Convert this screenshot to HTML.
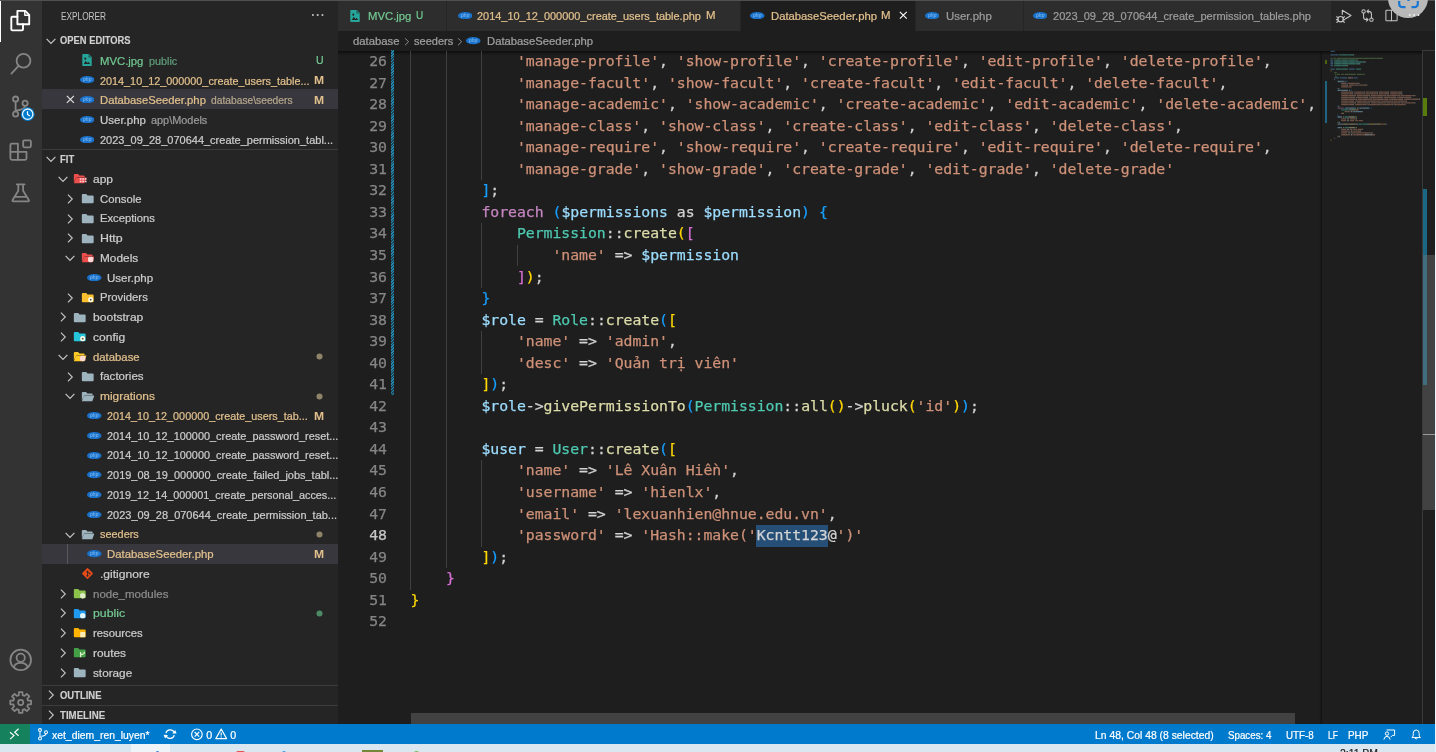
<!DOCTYPE html>
<html><head><meta charset="utf-8"><title>DatabaseSeeder.php - FIT - Visual Studio Code</title>
<style>
html,body{margin:0;padding:0;}
body{width:1436px;height:752px;overflow:hidden;background:#1e1e1e;position:relative;font-family:'Liberation Sans', sans-serif;}
.t{position:absolute;white-space:pre;font-family:'Liberation Sans', sans-serif;-webkit-text-stroke:0.22px currentColor;}
#root{position:absolute;left:0;top:0;width:1436px;height:752px;overflow:hidden;will-change:transform;}
.code{position:absolute;white-space:pre;font-family:'DejaVu Sans Mono', 'Liberation Mono', monospace;-webkit-text-stroke:0.25px currentColor;}
.code span.s{color:#ce9178} .code span.v{color:#9cdcfe} .code span.k{color:#c586c0}
.code span.c{color:#4ec9b0} .code span.f{color:#dcdcaa} .code span.y{color:#ffd700}
.code span.p{color:#da70d6} .code span.b{color:#179fff} .code span.w{color:#d4d4d4}
</style></head><body><div id="root">
<div style="position:absolute;left:0.00px;top:0.00px;width:42.00px;height:723.80px;background:#333333;"></div>
<div style="position:absolute;left:42.00px;top:0.00px;width:296.00px;height:723.80px;background:#252526;"></div>
<div style="position:absolute;left:338.00px;top:0.00px;width:1098.00px;height:30.80px;background:#252526;"></div>
<div style="position:absolute;left:0.00px;top:0.00px;width:1436.00px;height:1.00px;background:#505050;"></div>
<div style="position:absolute;left:0.00px;top:1.00px;width:1.30px;height:41.30px;background:#ffffff;"></div>
<svg style="position:absolute;left:0.00px;top:0.00px;" width="42.00" height="724.00" viewBox="0 0 42 724"><g fill="none" stroke-linejoin="round" stroke-linecap="round">
<g stroke="#ffffff" stroke-width="1.9">
<path d="M17.4 10.9 H25.2 L29.2 14.9 V24.2 H17.4 Z"/><path d="M24.8 11.3 V15.3 H28.8" stroke-width="1.4"/>
<path d="M17.4 16.8 H12.4 Q11.3 16.8 11.3 17.9 V29.3 Q11.3 30.4 12.4 30.4 H21.9 Q23 30.4 23 29.3 V24.2"/>
</g>
<g stroke="#858585" stroke-width="1.8">
<circle cx="23.5" cy="60.8" r="6.9"/><path d="M18.6 65.8 L11.4 73.6"/>
<circle cx="15.6" cy="99.1" r="2.6"/><circle cx="15.6" cy="114" r="2.6"/><circle cx="25.1" cy="103.2" r="2.6"/>
<path d="M15.6 101.7 V111.4"/><path d="M25.1 105.8 Q25 109.6 15.9 110.6"/>
<path d="M10.4 145.2 Q10.4 143.7 11.9 143.7 H17.9 V151.8 H26.5 V158.3 Q26.5 159.8 25 159.8 H11.9 Q10.4 159.8 10.4 158.3 Z"/>
<path d="M10.4 151.8 H17.9 V159.8"/>
<rect x="23.2" y="140.3" width="7.7" height="7.0" rx="1.2"/>
<path d="M16.8 184.3 H24.6 M18.3 184.3 V190.8 L12.6 200 Q12 201.4 13.4 201.4 H28 Q29.4 201.4 28.8 200 L23.1 190.8 V184.3"/><path d="M15.2 196.9 H26.2"/>
<circle cx="20.7" cy="659.9" r="10.3"/><circle cx="20.7" cy="657.7" r="4.1"/><path d="M13.8 667.2 Q15 662.8 20.7 662.8 Q26.4 662.8 27.6 667.2"/>
<path d="M28.06 700.62 L31.15 700.71 L31.15 704.29 L28.06 704.38 L27.24 706.38 L29.36 708.62 L26.82 711.16 L24.58 709.04 L22.58 709.86 L22.49 712.95 L18.91 712.95 L18.82 709.86 L16.82 709.04 L14.58 711.16 L12.04 708.62 L14.16 706.38 L13.34 704.38 L10.25 704.29 L10.25 700.71 L13.34 700.62 L14.16 698.62 L12.04 696.38 L14.58 693.84 L16.82 695.96 L18.82 695.14 L18.91 692.05 L22.49 692.05 L22.58 695.14 L24.58 695.96 L26.82 693.84 L29.36 696.38 L27.24 698.62 Z" stroke-width="1.7"/><circle cx="20.7" cy="702.5" r="2.6" stroke-width="1.7"/>
</g></g>
<circle cx="27.7" cy="114.2" r="6.9" fill="#007acc"/><circle cx="27.7" cy="114.2" r="5.2" fill="none" stroke="#eaf6ff" stroke-width="1.3"/>
<path d="M27.5 111.2 V114.4 L29.9 115.9" fill="none" stroke="#fff" stroke-width="1.2"/></svg>
<div class="t " style="left:60.50px;top:7.60px;line-height:16px;font-size:10.5px;color:#c4c4c4;font-weight:400;transform:scaleX(0.7886);transform-origin:0 50%;-webkit-text-stroke:0;">EXPLORER</div>
<svg style="position:absolute;left:310.60px;top:12.10px;" width="13.40" height="6.00" viewBox="0 0 14 6"><circle cx="2" cy="3" r="1.1" fill="#c5c5c5"/><circle cx="7" cy="3" r="1.1" fill="#c5c5c5"/><circle cx="12" cy="3" r="1.1" fill="#c5c5c5"/></svg>
<svg style="position:absolute;left:45.20px;top:34.97px;" width="12.00" height="12.00" viewBox="0 0 12 12"><path d="M1.6 3.9 L6 8.3 L10.4 3.9" fill="none" stroke="#c5c5c5" stroke-width="1.2"/></svg>
<div class="t " style="left:60.10px;top:33.17px;line-height:16px;font-size:10.1px;color:#d0d0d0;font-weight:700;transform:scaleX(0.9278);transform-origin:0 50%;-webkit-text-stroke:0.15px currentColor;">OPEN EDITORS</div>
<div style="position:absolute;left:42.00px;top:89.04px;width:296.00px;height:19.95px;background:#37373d;"></div>
<svg style="position:absolute;left:80.60px;top:53.22px;" width="12.00" height="14.00" viewBox="0 0 14 16"><path d="M2.5 1 H9 L12.5 4.5 V14 Q12.5 15 11.5 15 H2.5 Q1.5 15 1.5 14 V2 Q1.5 1 2.5 1 Z" fill="#26a69a"/><path d="M3.2 12.6 L5.6 9 L7.4 11.4 L8.6 10 L10.8 12.6 Z" fill="#252526"/><circle cx="5" cy="6.4" r="1.2" fill="#252526"/><path d="M8.6 1.4 V5 H12.2 Z" fill="#252526" opacity=".55"/></svg>
<div class="t " style="left:99.90px;top:52.82px;line-height:16px;font-size:11.15px;color:#73c991;font-weight:400;transform:scaleX(1.0159);transform-origin:0 50%;">MVC.jpg</div>
<div class="t " style="left:148.80px;top:53.52px;line-height:16px;font-size:10.0px;color:#5f9c79;font-weight:400;transform:scaleX(1.0826);transform-origin:0 50%;">public</div>
<div class="t " style="left:316.30px;top:52.32px;line-height:16px;font-size:10.6px;color:#73c991;font-weight:400;transform:scaleX(0.9927);transform-origin:0 50%;">U</div>
<svg style="position:absolute;left:79.75px;top:76.34px;" width="14.50" height="7.25" viewBox="0 0 24 12"><ellipse cx="12" cy="6" rx="12" ry="6" fill="#1a72ca"/><text x="12" y="8.4" font-family="Liberation Sans, sans-serif" font-size="7.6" font-weight="700" font-style="italic" fill="#8cc4f8" text-anchor="middle" opacity=".75">php</text></svg>
<div class="t " style="left:99.90px;top:72.56px;line-height:16px;font-size:11.15px;color:#e2c08d;font-weight:400;transform:scaleX(0.9718);transform-origin:0 50%;">2014_10_12_000000_create_users_table...</div>
<div class="t " style="left:314.10px;top:72.06px;line-height:16px;font-size:10.6px;color:#e2c08d;font-weight:700;transform:scaleX(1.1441);transform-origin:0 50%;-webkit-text-stroke:0;">M</div>
<svg style="position:absolute;left:66.30px;top:95.31px;" width="8.80" height="8.80" viewBox="0 0 10 10"><path d="M1 1 L9 9 M9 1 L1 9" stroke="#dddddd" stroke-width="1.45" fill="none"/></svg>
<svg style="position:absolute;left:79.75px;top:96.08px;" width="14.50" height="7.25" viewBox="0 0 24 12"><ellipse cx="12" cy="6" rx="12" ry="6" fill="#1a72ca"/><text x="12" y="8.4" font-family="Liberation Sans, sans-serif" font-size="7.6" font-weight="700" font-style="italic" fill="#8cc4f8" text-anchor="middle" opacity=".75">php</text></svg>
<div class="t " style="left:99.90px;top:92.31px;line-height:16px;font-size:11.15px;color:#e2c08d;font-weight:400;transform:scaleX(1.0116);transform-origin:0 50%;">DatabaseSeeder.php</div>
<div class="t " style="left:211.00px;top:93.01px;line-height:16px;font-size:10.0px;color:#b5a58c;font-weight:400;transform:scaleX(1.0262);transform-origin:0 50%;">database\seeders</div>
<div class="t " style="left:314.10px;top:91.81px;line-height:16px;font-size:10.6px;color:#e2c08d;font-weight:700;transform:scaleX(1.1441);transform-origin:0 50%;-webkit-text-stroke:0;">M</div>
<svg style="position:absolute;left:79.75px;top:115.83px;" width="14.50" height="7.25" viewBox="0 0 24 12"><ellipse cx="12" cy="6" rx="12" ry="6" fill="#1a72ca"/><text x="12" y="8.4" font-family="Liberation Sans, sans-serif" font-size="7.6" font-weight="700" font-style="italic" fill="#8cc4f8" text-anchor="middle" opacity=".75">php</text></svg>
<div class="t " style="left:99.90px;top:112.05px;line-height:16px;font-size:11.15px;color:#cccccc;font-weight:400;transform:scaleX(1.0293);transform-origin:0 50%;">User.php</div>
<div class="t " style="left:150.90px;top:112.75px;line-height:16px;font-size:10.0px;color:#9a9a9a;font-weight:400;transform:scaleX(1.0889);transform-origin:0 50%;">app\Models</div>
<svg style="position:absolute;left:79.75px;top:135.57px;" width="14.50" height="7.25" viewBox="0 0 24 12"><ellipse cx="12" cy="6" rx="12" ry="6" fill="#1a72ca"/><text x="12" y="8.4" font-family="Liberation Sans, sans-serif" font-size="7.6" font-weight="700" font-style="italic" fill="#8cc4f8" text-anchor="middle" opacity=".75">php</text></svg>
<div class="t " style="left:99.90px;top:131.80px;line-height:16px;font-size:11.15px;color:#cccccc;font-weight:400;transform:scaleX(0.9873);transform-origin:0 50%;">2023_09_28_070644_create_permission_tabl...</div>
<div style="position:absolute;left:42.00px;top:148.57px;width:296.00px;height:1.00px;background:#3c3c3c;"></div>
<svg style="position:absolute;left:45.20px;top:153.14px;" width="12.00" height="12.00" viewBox="0 0 12 12"><path d="M1.6 3.9 L6 8.3 L10.4 3.9" fill="none" stroke="#c5c5c5" stroke-width="1.2"/></svg>
<div class="t " style="left:60.10px;top:152.14px;line-height:16px;font-size:10.1px;color:#d0d0d0;font-weight:700;transform:scaleX(0.9379);transform-origin:0 50%;-webkit-text-stroke:0.15px currentColor;">FIT</div>
<svg style="position:absolute;left:57.00px;top:173.09px;" width="12.00" height="12.00" viewBox="0 0 12 12"><path d="M1.6 3.9 L6 8.3 L10.4 3.9" fill="none" stroke="#c5c5c5" stroke-width="1.2"/></svg>
<svg style="position:absolute;left:73.45px;top:173.35px;" width="13.50" height="11.07" viewBox="0 0 16 13"><path d="M1 2.2 Q1 1 2.2 1 H6 L7.6 2.8 H12.6 Q13.8 2.8 13.8 4 V5 H4 L1 11 Z" fill="#ec4e4c"/><path d="M3.6 5.2 H16 L13.4 12 H1 Z" fill="#ec4e4c"/><g fill="#ffcdd2"><rect x="8" y="6" width="2" height="2"/><rect x="11" y="6" width="2" height="2"/><rect x="14" y="6" width="2" height="2"/><rect x="8" y="9" width="2" height="2"/><rect x="11" y="9" width="2" height="2"/><rect x="14" y="9" width="2" height="2"/></g></svg>
<div class="t " style="left:92.60px;top:170.89px;line-height:16px;font-size:11.15px;color:#cccccc;font-weight:400;transform:scaleX(1.0756);transform-origin:0 50%;">app</div>
<svg style="position:absolute;left:64.10px;top:192.83px;" width="12.00" height="12.00" viewBox="0 0 12 12"><path d="M3.9 1.6 L8.3 6 L3.9 10.4" fill="none" stroke="#c5c5c5" stroke-width="1.1"/></svg>
<svg style="position:absolute;left:80.50px;top:193.10px;" width="13.50" height="11.07" viewBox="0 0 16 13"><path d="M1 2.2 Q1 1 2.2 1 H6.2 L7.8 2.8 H13.8 Q15 2.8 15 4 V10.8 Q15 12 13.8 12 H2.2 Q1 12 1 10.8 Z" fill="#9db3bd"/></svg>
<div class="t " style="left:99.70px;top:190.63px;line-height:16px;font-size:11.15px;color:#cccccc;font-weight:400;transform:scaleX(1.0153);transform-origin:0 50%;">Console</div>
<svg style="position:absolute;left:64.10px;top:212.58px;" width="12.00" height="12.00" viewBox="0 0 12 12"><path d="M3.9 1.6 L8.3 6 L3.9 10.4" fill="none" stroke="#c5c5c5" stroke-width="1.1"/></svg>
<svg style="position:absolute;left:80.50px;top:212.84px;" width="13.50" height="11.07" viewBox="0 0 16 13"><path d="M1 2.2 Q1 1 2.2 1 H6.2 L7.8 2.8 H13.8 Q15 2.8 15 4 V10.8 Q15 12 13.8 12 H2.2 Q1 12 1 10.8 Z" fill="#9db3bd"/></svg>
<div class="t " style="left:99.70px;top:210.38px;line-height:16px;font-size:11.15px;color:#cccccc;font-weight:400;transform:scaleX(1.0073);transform-origin:0 50%;">Exceptions</div>
<svg style="position:absolute;left:64.10px;top:232.32px;" width="12.00" height="12.00" viewBox="0 0 12 12"><path d="M3.9 1.6 L8.3 6 L3.9 10.4" fill="none" stroke="#c5c5c5" stroke-width="1.1"/></svg>
<svg style="position:absolute;left:80.50px;top:232.59px;" width="13.50" height="11.07" viewBox="0 0 16 13"><path d="M1 2.2 Q1 1 2.2 1 H6.2 L7.8 2.8 H13.8 Q15 2.8 15 4 V10.8 Q15 12 13.8 12 H2.2 Q1 12 1 10.8 Z" fill="#9db3bd"/></svg>
<div class="t " style="left:99.70px;top:230.12px;line-height:16px;font-size:11.15px;color:#cccccc;font-weight:400;transform:scaleX(1.1107);transform-origin:0 50%;">Http</div>
<svg style="position:absolute;left:64.10px;top:252.07px;" width="12.00" height="12.00" viewBox="0 0 12 12"><path d="M1.6 3.9 L6 8.3 L10.4 3.9" fill="none" stroke="#c5c5c5" stroke-width="1.2"/></svg>
<svg style="position:absolute;left:80.50px;top:252.33px;" width="13.50" height="11.07" viewBox="0 0 16 13"><path d="M1 2.2 Q1 1 2.2 1 H6 L7.6 2.8 H12.6 Q13.8 2.8 13.8 4 V5 H4 L1 11 Z" fill="#ec4e4c"/><path d="M3.6 5.2 H16 L13.4 12 H1 Z" fill="#ec4e4c"/><g><ellipse cx="11.5" cy="7" rx="3.2" ry="1.4" fill="#ffd9d6"/><path d="M8.3 7 V11 Q11.5 13 14.7 11 V7 Q11.5 9 8.3 7Z" fill="#ffd9d6"/></g></svg>
<div class="t " style="left:99.70px;top:249.87px;line-height:16px;font-size:11.15px;color:#cccccc;font-weight:400;transform:scaleX(1.0634);transform-origin:0 50%;">Models</div>
<svg style="position:absolute;left:87.05px;top:273.99px;" width="14.50" height="7.25" viewBox="0 0 24 12"><ellipse cx="12" cy="6" rx="12" ry="6" fill="#1a72ca"/><text x="12" y="8.4" font-family="Liberation Sans, sans-serif" font-size="7.6" font-weight="700" font-style="italic" fill="#8cc4f8" text-anchor="middle" opacity=".75">php</text></svg>
<div class="t " style="left:106.80px;top:269.61px;line-height:16px;font-size:11.15px;color:#cccccc;font-weight:400;transform:scaleX(1.0360);transform-origin:0 50%;">User.php</div>
<svg style="position:absolute;left:64.10px;top:291.56px;" width="12.00" height="12.00" viewBox="0 0 12 12"><path d="M3.9 1.6 L8.3 6 L3.9 10.4" fill="none" stroke="#c5c5c5" stroke-width="1.1"/></svg>
<svg style="position:absolute;left:80.50px;top:291.82px;" width="13.50" height="11.07" viewBox="0 0 16 13"><path d="M1 2.2 Q1 1 2.2 1 H6.2 L7.8 2.8 H13.8 Q15 2.8 15 4 V10.8 Q15 12 13.8 12 H2.2 Q1 12 1 10.8 Z" fill="#fbc02d"/><circle cx="11.5" cy="9" r="3" fill="#fffde7"/><circle cx="11.5" cy="9" r="1.1" fill="#555"/></svg>
<div class="t " style="left:99.70px;top:289.36px;line-height:16px;font-size:11.15px;color:#cccccc;font-weight:400;transform:scaleX(1.0157);transform-origin:0 50%;">Providers</div>
<svg style="position:absolute;left:57.00px;top:311.30px;" width="12.00" height="12.00" viewBox="0 0 12 12"><path d="M3.9 1.6 L8.3 6 L3.9 10.4" fill="none" stroke="#c5c5c5" stroke-width="1.1"/></svg>
<svg style="position:absolute;left:73.45px;top:311.57px;" width="13.50" height="11.07" viewBox="0 0 16 13"><path d="M1 2.2 Q1 1 2.2 1 H6.2 L7.8 2.8 H13.8 Q15 2.8 15 4 V10.8 Q15 12 13.8 12 H2.2 Q1 12 1 10.8 Z" fill="#9db3bd"/></svg>
<div class="t " style="left:92.60px;top:309.10px;line-height:16px;font-size:11.15px;color:#cccccc;font-weight:400;transform:scaleX(1.0828);transform-origin:0 50%;">bootstrap</div>
<svg style="position:absolute;left:57.00px;top:331.05px;" width="12.00" height="12.00" viewBox="0 0 12 12"><path d="M3.9 1.6 L8.3 6 L3.9 10.4" fill="none" stroke="#c5c5c5" stroke-width="1.1"/></svg>
<svg style="position:absolute;left:73.45px;top:331.31px;" width="13.50" height="11.07" viewBox="0 0 16 13"><path d="M1 2.2 Q1 1 2.2 1 H6.2 L7.8 2.8 H13.8 Q15 2.8 15 4 V10.8 Q15 12 13.8 12 H2.2 Q1 12 1 10.8 Z" fill="#26c6da"/><circle cx="11.5" cy="9" r="3" fill="#fffde7"/><circle cx="11.5" cy="9" r="1.1" fill="#555"/></svg>
<div class="t " style="left:92.60px;top:328.85px;line-height:16px;font-size:11.15px;color:#cccccc;font-weight:400;transform:scaleX(1.0796);transform-origin:0 50%;">config</div>
<svg style="position:absolute;left:57.00px;top:350.79px;" width="12.00" height="12.00" viewBox="0 0 12 12"><path d="M1.6 3.9 L6 8.3 L10.4 3.9" fill="none" stroke="#c5c5c5" stroke-width="1.2"/></svg>
<svg style="position:absolute;left:73.45px;top:351.06px;" width="13.50" height="11.07" viewBox="0 0 16 13"><path d="M1 2.2 Q1 1 2.2 1 H6 L7.6 2.8 H12.6 Q13.8 2.8 13.8 4 V5 H4 L1 11 Z" fill="#ffca28"/><path d="M3.6 5.2 H16 L13.4 12 H1 Z" fill="#ffca28"/><g><ellipse cx="11.5" cy="7" rx="3.2" ry="1.4" fill="#ffd9d6"/><path d="M8.3 7 V11 Q11.5 13 14.7 11 V7 Q11.5 9 8.3 7Z" fill="#ffd9d6"/></g></svg>
<div class="t " style="left:92.60px;top:348.59px;line-height:16px;font-size:11.15px;color:#e2c08d;font-weight:400;transform:scaleX(1.0165);transform-origin:0 50%;">database</div>
<svg style="position:absolute;left:316.00px;top:353.09px;" width="7.00" height="7.00" viewBox="0 0 6 6"><circle cx="3" cy="3" r="2.6" fill="#8f8469"/></svg>
<svg style="position:absolute;left:64.10px;top:370.54px;" width="12.00" height="12.00" viewBox="0 0 12 12"><path d="M3.9 1.6 L8.3 6 L3.9 10.4" fill="none" stroke="#c5c5c5" stroke-width="1.1"/></svg>
<svg style="position:absolute;left:80.50px;top:370.80px;" width="13.50" height="11.07" viewBox="0 0 16 13"><path d="M1 2.2 Q1 1 2.2 1 H6.2 L7.8 2.8 H13.8 Q15 2.8 15 4 V10.8 Q15 12 13.8 12 H2.2 Q1 12 1 10.8 Z" fill="#9db3bd"/></svg>
<div class="t " style="left:99.70px;top:368.34px;line-height:16px;font-size:11.15px;color:#cccccc;font-weight:400;transform:scaleX(1.0354);transform-origin:0 50%;">factories</div>
<svg style="position:absolute;left:64.10px;top:390.28px;" width="12.00" height="12.00" viewBox="0 0 12 12"><path d="M1.6 3.9 L6 8.3 L10.4 3.9" fill="none" stroke="#c5c5c5" stroke-width="1.2"/></svg>
<svg style="position:absolute;left:80.50px;top:390.55px;" width="13.50" height="11.07" viewBox="0 0 16 13"><path d="M1 2.2 Q1 1 2.2 1 H6 L7.6 2.8 H12.6 Q13.8 2.8 13.8 4 V5 H4 L1 11 Z" fill="#9db3bd"/><path d="M3.6 5.2 H16 L13.4 12 H1 Z" fill="#9db3bd"/></svg>
<div class="t " style="left:99.70px;top:388.08px;line-height:16px;font-size:11.15px;color:#e2c08d;font-weight:400;transform:scaleX(1.0683);transform-origin:0 50%;">migrations</div>
<svg style="position:absolute;left:316.00px;top:392.58px;" width="7.00" height="7.00" viewBox="0 0 6 6"><circle cx="3" cy="3" r="2.6" fill="#8f8469"/></svg>
<svg style="position:absolute;left:87.05px;top:412.20px;" width="14.50" height="7.25" viewBox="0 0 24 12"><ellipse cx="12" cy="6" rx="12" ry="6" fill="#1a72ca"/><text x="12" y="8.4" font-family="Liberation Sans, sans-serif" font-size="7.6" font-weight="700" font-style="italic" fill="#8cc4f8" text-anchor="middle" opacity=".75">php</text></svg>
<div class="t " style="left:106.80px;top:407.83px;line-height:16px;font-size:11.15px;color:#e2c08d;font-weight:400;transform:scaleX(0.9700);transform-origin:0 50%;">2014_10_12_000000_create_users_tab...</div>
<div class="t " style="left:314.20px;top:408.03px;line-height:16px;font-size:10.6px;color:#e2c08d;font-weight:700;transform:scaleX(1.1441);transform-origin:0 50%;-webkit-text-stroke:0;">M</div>
<svg style="position:absolute;left:87.05px;top:431.95px;" width="14.50" height="7.25" viewBox="0 0 24 12"><ellipse cx="12" cy="6" rx="12" ry="6" fill="#1a72ca"/><text x="12" y="8.4" font-family="Liberation Sans, sans-serif" font-size="7.6" font-weight="700" font-style="italic" fill="#8cc4f8" text-anchor="middle" opacity=".75">php</text></svg>
<div class="t " style="left:106.80px;top:427.57px;line-height:16px;font-size:11.15px;color:#cccccc;font-weight:400;transform:scaleX(0.9779);transform-origin:0 50%;">2014_10_12_100000_create_password_reset...</div>
<svg style="position:absolute;left:87.05px;top:451.69px;" width="14.50" height="7.25" viewBox="0 0 24 12"><ellipse cx="12" cy="6" rx="12" ry="6" fill="#1a72ca"/><text x="12" y="8.4" font-family="Liberation Sans, sans-serif" font-size="7.6" font-weight="700" font-style="italic" fill="#8cc4f8" text-anchor="middle" opacity=".75">php</text></svg>
<div class="t " style="left:106.80px;top:447.32px;line-height:16px;font-size:11.15px;color:#cccccc;font-weight:400;transform:scaleX(0.9779);transform-origin:0 50%;">2014_10_12_100000_create_password_reset...</div>
<svg style="position:absolute;left:87.05px;top:471.44px;" width="14.50" height="7.25" viewBox="0 0 24 12"><ellipse cx="12" cy="6" rx="12" ry="6" fill="#1a72ca"/><text x="12" y="8.4" font-family="Liberation Sans, sans-serif" font-size="7.6" font-weight="700" font-style="italic" fill="#8cc4f8" text-anchor="middle" opacity=".75">php</text></svg>
<div class="t " style="left:106.80px;top:467.06px;line-height:16px;font-size:11.15px;color:#cccccc;font-weight:400;transform:scaleX(0.9830);transform-origin:0 50%;">2019_08_19_000000_create_failed_jobs_tabl...</div>
<svg style="position:absolute;left:87.05px;top:491.18px;" width="14.50" height="7.25" viewBox="0 0 24 12"><ellipse cx="12" cy="6" rx="12" ry="6" fill="#1a72ca"/><text x="12" y="8.4" font-family="Liberation Sans, sans-serif" font-size="7.6" font-weight="700" font-style="italic" fill="#8cc4f8" text-anchor="middle" opacity=".75">php</text></svg>
<div class="t " style="left:106.80px;top:486.81px;line-height:16px;font-size:11.15px;color:#cccccc;font-weight:400;transform:scaleX(0.9715);transform-origin:0 50%;">2019_12_14_000001_create_personal_acces...</div>
<svg style="position:absolute;left:87.05px;top:510.93px;" width="14.50" height="7.25" viewBox="0 0 24 12"><ellipse cx="12" cy="6" rx="12" ry="6" fill="#1a72ca"/><text x="12" y="8.4" font-family="Liberation Sans, sans-serif" font-size="7.6" font-weight="700" font-style="italic" fill="#8cc4f8" text-anchor="middle" opacity=".75">php</text></svg>
<div class="t " style="left:106.80px;top:506.55px;line-height:16px;font-size:11.15px;color:#cccccc;font-weight:400;transform:scaleX(0.9849);transform-origin:0 50%;">2023_09_28_070644_create_permission_tab...</div>
<svg style="position:absolute;left:64.10px;top:528.50px;" width="12.00" height="12.00" viewBox="0 0 12 12"><path d="M1.6 3.9 L6 8.3 L10.4 3.9" fill="none" stroke="#c5c5c5" stroke-width="1.2"/></svg>
<svg style="position:absolute;left:80.50px;top:528.76px;" width="13.50" height="11.07" viewBox="0 0 16 13"><path d="M1 2.2 Q1 1 2.2 1 H6 L7.6 2.8 H12.6 Q13.8 2.8 13.8 4 V5 H4 L1 11 Z" fill="#9db3bd"/><path d="M3.6 5.2 H16 L13.4 12 H1 Z" fill="#9db3bd"/></svg>
<div class="t " style="left:99.70px;top:526.30px;line-height:16px;font-size:11.15px;color:#e2c08d;font-weight:400;transform:scaleX(0.9788);transform-origin:0 50%;">seeders</div>
<svg style="position:absolute;left:316.00px;top:530.80px;" width="7.00" height="7.00" viewBox="0 0 6 6"><circle cx="3" cy="3" r="2.6" fill="#8f8469"/></svg>
<div style="position:absolute;left:42.00px;top:544.17px;width:296.00px;height:19.75px;background:#37373d;"></div>
<svg style="position:absolute;left:87.05px;top:550.42px;" width="14.50" height="7.25" viewBox="0 0 24 12"><ellipse cx="12" cy="6" rx="12" ry="6" fill="#1a72ca"/><text x="12" y="8.4" font-family="Liberation Sans, sans-serif" font-size="7.6" font-weight="700" font-style="italic" fill="#8cc4f8" text-anchor="middle" opacity=".75">php</text></svg>
<div class="t " style="left:106.80px;top:546.04px;line-height:16px;font-size:11.15px;color:#e2c08d;font-weight:400;transform:scaleX(1.0183);transform-origin:0 50%;">DatabaseSeeder.php</div>
<div class="t " style="left:314.20px;top:546.24px;line-height:16px;font-size:10.6px;color:#e2c08d;font-weight:700;transform:scaleX(1.1441);transform-origin:0 50%;-webkit-text-stroke:0;">M</div>
<div style="position:absolute;left:66.80px;top:544.17px;width:1.00px;height:19.75px;background:#5a5a5a;"></div>
<svg style="position:absolute;left:80.75px;top:567.29px;" width="13.00" height="13.00" viewBox="0 0 12 12"><rect x="2.2" y="2.2" width="7.6" height="7.6" rx="1" transform="rotate(45 6 6)" fill="#e64a19"/><circle cx="6" cy="4.3" r=".9" fill="#252526"/><circle cx="6" cy="8" r=".9" fill="#252526"/><circle cx="8" cy="6" r=".8" fill="#252526"/><path d="M6 4.3 V8 M6 4.6 L8 6" stroke="#252526" stroke-width=".7"/></svg>
<div class="t " style="left:99.70px;top:565.79px;line-height:16px;font-size:11.15px;color:#cccccc;font-weight:400;transform:scaleX(1.0841);transform-origin:0 50%;">.gitignore</div>
<svg style="position:absolute;left:57.00px;top:587.73px;" width="12.00" height="12.00" viewBox="0 0 12 12"><path d="M3.9 1.6 L8.3 6 L3.9 10.4" fill="none" stroke="#c5c5c5" stroke-width="1.1"/></svg>
<svg style="position:absolute;left:73.45px;top:588.00px;" width="13.50" height="11.07" viewBox="0 0 16 13"><path d="M1 2.2 Q1 1 2.2 1 H6.2 L7.8 2.8 H13.8 Q15 2.8 15 4 V10.8 Q15 12 13.8 12 H2.2 Q1 12 1 10.8 Z" fill="#8bc34a"/><path d="M11.5 5.6 L14.6 7.4 V11 L11.5 12.8 L8.4 11 V7.4 Z" fill="#dcedc8"/></svg>
<div class="t " style="left:92.60px;top:585.53px;line-height:16px;font-size:11.15px;color:#8c8c8c;font-weight:400;transform:scaleX(1.0316);transform-origin:0 50%;">node_modules</div>
<svg style="position:absolute;left:57.00px;top:607.48px;" width="12.00" height="12.00" viewBox="0 0 12 12"><path d="M3.9 1.6 L8.3 6 L3.9 10.4" fill="none" stroke="#c5c5c5" stroke-width="1.1"/></svg>
<svg style="position:absolute;left:73.45px;top:607.74px;" width="13.50" height="11.07" viewBox="0 0 16 13"><path d="M1 2.2 Q1 1 2.2 1 H6.2 L7.8 2.8 H13.8 Q15 2.8 15 4 V10.8 Q15 12 13.8 12 H2.2 Q1 12 1 10.8 Z" fill="#1e9bf0"/><circle cx="11.5" cy="9" r="3.2" fill="#e1f5fe"/></svg>
<div class="t " style="left:92.60px;top:605.28px;line-height:16px;font-size:11.15px;color:#73c991;font-weight:400;transform:scaleX(1.1027);transform-origin:0 50%;">public</div>
<svg style="position:absolute;left:316.00px;top:609.78px;" width="7.00" height="7.00" viewBox="0 0 6 6"><circle cx="3" cy="3" r="2.6" fill="#4d8a66"/></svg>
<svg style="position:absolute;left:57.00px;top:627.22px;" width="12.00" height="12.00" viewBox="0 0 12 12"><path d="M3.9 1.6 L8.3 6 L3.9 10.4" fill="none" stroke="#c5c5c5" stroke-width="1.1"/></svg>
<svg style="position:absolute;left:73.45px;top:627.49px;" width="13.50" height="11.07" viewBox="0 0 16 13"><path d="M1 2.2 Q1 1 2.2 1 H6.2 L7.8 2.8 H13.8 Q15 2.8 15 4 V10.8 Q15 12 13.8 12 H2.2 Q1 12 1 10.8 Z" fill="#ffb300"/><rect x="8.5" y="5.8" width="6" height="6.4" rx=".6" fill="#ffecb3"/></svg>
<div class="t " style="left:92.60px;top:625.02px;line-height:16px;font-size:11.15px;color:#cccccc;font-weight:400;transform:scaleX(1.0159);transform-origin:0 50%;">resources</div>
<svg style="position:absolute;left:57.00px;top:646.97px;" width="12.00" height="12.00" viewBox="0 0 12 12"><path d="M3.9 1.6 L8.3 6 L3.9 10.4" fill="none" stroke="#c5c5c5" stroke-width="1.1"/></svg>
<svg style="position:absolute;left:73.45px;top:647.23px;" width="13.50" height="11.07" viewBox="0 0 16 13"><path d="M1 2.2 Q1 1 2.2 1 H6.2 L7.8 2.8 H13.8 Q15 2.8 15 4 V10.8 Q15 12 13.8 12 H2.2 Q1 12 1 10.8 Z" fill="#43a047"/><path d="M9 6 V12 M9 9 Q13.5 9 13.5 6 M13.5 6 V5.6" stroke="#dcedc8" stroke-width="1.5" fill="none"/></svg>
<div class="t " style="left:92.60px;top:644.77px;line-height:16px;font-size:11.15px;color:#cccccc;font-weight:400;transform:scaleX(1.0656);transform-origin:0 50%;">routes</div>
<svg style="position:absolute;left:57.00px;top:666.71px;" width="12.00" height="12.00" viewBox="0 0 12 12"><path d="M3.9 1.6 L8.3 6 L3.9 10.4" fill="none" stroke="#c5c5c5" stroke-width="1.1"/></svg>
<svg style="position:absolute;left:73.45px;top:666.98px;" width="13.50" height="11.07" viewBox="0 0 16 13"><path d="M1 2.2 Q1 1 2.2 1 H6.2 L7.8 2.8 H13.8 Q15 2.8 15 4 V10.8 Q15 12 13.8 12 H2.2 Q1 12 1 10.8 Z" fill="#9db3bd"/></svg>
<div class="t " style="left:92.60px;top:664.51px;line-height:16px;font-size:11.15px;color:#cccccc;font-weight:400;transform:scaleX(1.0546);transform-origin:0 50%;">storage</div>
<div style="position:absolute;left:42.00px;top:684.70px;width:296.00px;height:1.00px;background:#3c3c3c;"></div>
<svg style="position:absolute;left:45.20px;top:689.27px;" width="12.00" height="12.00" viewBox="0 0 12 12"><path d="M3.9 1.6 L8.3 6 L3.9 10.4" fill="none" stroke="#c5c5c5" stroke-width="1.1"/></svg>
<div class="t " style="left:60.10px;top:688.07px;line-height:16px;font-size:10.1px;color:#d0d0d0;font-weight:700;transform:scaleX(0.9365);transform-origin:0 50%;-webkit-text-stroke:0.15px currentColor;">OUTLINE</div>
<div style="position:absolute;left:42.00px;top:705.25px;width:296.00px;height:1.00px;background:#3c3c3c;"></div>
<svg style="position:absolute;left:45.20px;top:709.02px;" width="12.00" height="12.00" viewBox="0 0 12 12"><path d="M3.9 1.6 L8.3 6 L3.9 10.4" fill="none" stroke="#c5c5c5" stroke-width="1.1"/></svg>
<div class="t " style="left:60.10px;top:707.82px;line-height:16px;font-size:10.1px;color:#d0d0d0;font-weight:700;transform:scaleX(0.9573);transform-origin:0 50%;-webkit-text-stroke:0.15px currentColor;">TIMELINE</div>
<div style="position:absolute;left:338.00px;top:1.20px;width:108.40px;height:29.60px;background:#2d2d2d;"></div>
<div style="position:absolute;left:447.30px;top:1.20px;width:292.80px;height:29.60px;background:#2d2d2d;"></div>
<div style="position:absolute;left:741.00px;top:1.20px;width:173.60px;height:29.60px;background:#1e1e1e;"></div>
<div style="position:absolute;left:915.50px;top:1.20px;width:107.80px;height:29.60px;background:#2d2d2d;"></div>
<div style="position:absolute;left:1024.20px;top:1.20px;width:306.70px;height:29.60px;background:#2d2d2d;"></div>
<svg style="position:absolute;left:348.50px;top:8.70px;" width="12.00" height="14.00" viewBox="0 0 14 16"><path d="M2.5 1 H9 L12.5 4.5 V14 Q12.5 15 11.5 15 H2.5 Q1.5 15 1.5 14 V2 Q1.5 1 2.5 1 Z" fill="#26a69a"/><path d="M3.2 12.6 L5.6 9 L7.4 11.4 L8.6 10 L10.8 12.6 Z" fill="#252526"/><circle cx="5" cy="6.4" r="1.2" fill="#252526"/><path d="M8.6 1.4 V5 H12.2 Z" fill="#252526" opacity=".55"/></svg>
<div class="t " style="left:367.60px;top:7.70px;line-height:16px;font-size:11.15px;color:#73c991;font-weight:400;transform:scaleX(1.0159);transform-origin:0 50%;">MVC.jpg</div>
<div class="t " style="left:415.60px;top:7.70px;line-height:16px;font-size:10.3px;color:#73c991;font-weight:400;transform:scaleX(0.9681);transform-origin:0 50%;">U</div>
<svg style="position:absolute;left:457.75px;top:12.07px;" width="14.50" height="7.25" viewBox="0 0 24 12"><ellipse cx="12" cy="6" rx="12" ry="6" fill="#1a72ca"/><text x="12" y="8.4" font-family="Liberation Sans, sans-serif" font-size="7.6" font-weight="700" font-style="italic" fill="#8cc4f8" text-anchor="middle" opacity=".75">php</text></svg>
<div class="t " style="left:477.40px;top:7.70px;line-height:16px;font-size:11.15px;color:#e2c08d;font-weight:400;transform:scaleX(0.9822);transform-origin:0 50%;">2014_10_12_000000_create_users_table.php</div>
<div class="t " style="left:706.30px;top:7.70px;line-height:16px;font-size:10.3px;color:#e2c08d;font-weight:400;transform:scaleX(1.1075);transform-origin:0 50%;">M</div>
<svg style="position:absolute;left:750.05px;top:12.07px;" width="14.50" height="7.25" viewBox="0 0 24 12"><ellipse cx="12" cy="6" rx="12" ry="6" fill="#1a72ca"/><text x="12" y="8.4" font-family="Liberation Sans, sans-serif" font-size="7.6" font-weight="700" font-style="italic" fill="#8cc4f8" text-anchor="middle" opacity=".75">php</text></svg>
<div class="t " style="left:770.60px;top:7.70px;line-height:16px;font-size:11.15px;color:#e2c08d;font-weight:400;transform:scaleX(1.0125);transform-origin:0 50%;">DatabaseSeeder.php</div>
<div class="t " style="left:881.30px;top:7.70px;line-height:16px;font-size:10.3px;color:#e2c08d;font-weight:400;transform:scaleX(1.1075);transform-origin:0 50%;">M</div>
<svg style="position:absolute;left:899.10px;top:11.20px;" width="8.60" height="8.60" viewBox="0 0 10 10"><path d="M1 1 L9 9 M9 1 L1 9" stroke="#ffffff" stroke-width="1.25" fill="none"/></svg>
<svg style="position:absolute;left:924.95px;top:12.07px;" width="14.50" height="7.25" viewBox="0 0 24 12"><ellipse cx="12" cy="6" rx="12" ry="6" fill="#1a72ca"/><text x="12" y="8.4" font-family="Liberation Sans, sans-serif" font-size="7.6" font-weight="700" font-style="italic" fill="#8cc4f8" text-anchor="middle" opacity=".75">php</text></svg>
<div class="t " style="left:945.50px;top:7.70px;line-height:16px;font-size:11.15px;color:#9d9d9d;font-weight:400;transform:scaleX(1.0270);transform-origin:0 50%;">User.php</div>
<svg style="position:absolute;left:1032.95px;top:12.07px;" width="14.50" height="7.25" viewBox="0 0 24 12"><ellipse cx="12" cy="6" rx="12" ry="6" fill="#1a72ca"/><text x="12" y="8.4" font-family="Liberation Sans, sans-serif" font-size="7.6" font-weight="700" font-style="italic" fill="#8cc4f8" text-anchor="middle" opacity=".75">php</text></svg>
<div class="t " style="left:1053.40px;top:7.70px;line-height:16px;font-size:11.15px;color:#9d9d9d;font-weight:400;transform:scaleX(0.9917);transform-origin:0 50%;">2023_09_28_070644_create_permission_tables.php</div>
<svg style="position:absolute;left:1334.00px;top:6.00px;" width="20.00" height="20.00" viewBox="1334 6 20 20"><g fill="none" stroke="#c5c5c5" stroke-width="1.15" stroke-linejoin="round" stroke-linecap="round"><path d="M1342.3 14.2 V10.3 L1351 15.5 L1345.6 18.7"/><circle cx="1340.6" cy="19.2" r="2.7"/><path d="M1336.7 16.8 L1338.2 17.9 M1336.4 19.6 H1337.9 M1336.9 22.3 L1338.4 21.1 M1344.5 16.8 L1343 17.9 M1344.8 19.6 H1343.3 M1344.3 22.3 L1342.8 21.1"/></g></svg>
<svg style="position:absolute;left:1360.00px;top:8.20px;" width="15.00" height="15.00" viewBox="0 0 16 16"><g fill="none" stroke="#c5c5c5" stroke-width="1.1" stroke-linejoin="round" stroke-linecap="round"><circle cx="3.8" cy="3.6" r="1.8"/><circle cx="12.2" cy="12.4" r="1.8"/><path d="M3.8 5.4 V9.5 Q3.8 12.4 7 12.4 H8.2 M7 10.8 L8.6 12.4 L7 14"/><path d="M12.2 10.6 V6.5 Q12.2 3.6 9 3.6 H7.8 M9 2 L7.4 3.6 L9 5.2"/></g></svg>
<svg style="position:absolute;left:1384.00px;top:8.20px;" width="15.00" height="15.00" viewBox="0 0 16 16"><g fill="none" stroke="#c5c5c5" stroke-width="1.1" stroke-linejoin="round" stroke-linecap="round"><rect x="2" y="2.5" width="12" height="11" rx=".8"/><path d="M8 2.5 V13.5"/></g></svg>
<div style="position:absolute;left:1388.4px;top:-21.9px;width:39.8px;height:39.8px;border-radius:50%;background:#b9b9b9;"></div>
<svg style="position:absolute;left:1398.00px;top:-8.00px;" width="21.00" height="16.50" viewBox="0 0 21 16.5"><path d="M1.2 9 V11.5 Q1.2 15.2 5 15.2 H7.5 M13.5 15.2 H16 Q19.8 15.2 19.8 11.5 V9" fill="none" stroke="#1976d2" stroke-width="2.2"/><circle cx="10.5" cy="7.5" r="1.6" fill="#1976d2"/></svg>
<svg style="position:absolute;left:1407.00px;top:12.90px;" width="14.00" height="4.00" viewBox="0 0 14 4"><circle cx="2.7" cy="2" r="0.95" fill="#f2f2f2"/><circle cx="7.1" cy="2" r="0.95" fill="#f2f2f2"/><circle cx="11.5" cy="2" r="0.95" fill="#f2f2f2"/></svg>
<div class="t " style="left:352.60px;top:32.90px;line-height:16px;font-size:11.15px;color:#a0a0a0;font-weight:400;transform:scaleX(1.0143);transform-origin:0 50%;">database</div>
<svg style="position:absolute;left:402.05px;top:36.55px;" width="9.50" height="9.50" viewBox="0 0 12 12"><path d="M3.9 1.6 L8.3 6 L3.9 10.4" fill="none" stroke="#a0a0a0" stroke-width="1.1"/></svg>
<div class="t " style="left:413.60px;top:32.90px;line-height:16px;font-size:11.15px;color:#a0a0a0;font-weight:400;transform:scaleX(0.9889);transform-origin:0 50%;">seeders</div>
<svg style="position:absolute;left:454.75px;top:36.55px;" width="9.50" height="9.50" viewBox="0 0 12 12"><path d="M3.9 1.6 L8.3 6 L3.9 10.4" fill="none" stroke="#a0a0a0" stroke-width="1.1"/></svg>
<svg style="position:absolute;left:466.35px;top:37.27px;" width="14.50" height="7.25" viewBox="0 0 24 12"><ellipse cx="12" cy="6" rx="12" ry="6" fill="#1a72ca"/><text x="12" y="8.4" font-family="Liberation Sans, sans-serif" font-size="7.6" font-weight="700" font-style="italic" fill="#8cc4f8" text-anchor="middle" opacity=".75">php</text></svg>
<div class="t " style="left:487.20px;top:32.90px;line-height:16px;font-size:11.15px;color:#a0a0a0;font-weight:400;transform:scaleX(1.0125);transform-origin:0 50%;">DatabaseSeeder.php</div>
<div style="position:absolute;left:338.0px;top:50.5px;width:1084.0px;height:4px;background:linear-gradient(#000 0,rgba(0,0,0,0) 100%);opacity:.55"></div>
<div style="position:absolute;left:755.72px;top:525.00px;width:72.54px;height:21.55px;background:#264f78;"></div>
<div style="position:absolute;left:410.40px;top:50.90px;width:1.00px;height:538.75px;background:#404040;"></div>
<div style="position:absolute;left:445.92px;top:50.90px;width:1.00px;height:517.20px;background:#404040;"></div>
<div style="position:absolute;left:481.44px;top:50.90px;width:1.00px;height:129.30px;background:#404040;"></div>
<div style="position:absolute;left:481.44px;top:223.30px;width:1.00px;height:64.65px;background:#404040;"></div>
<div style="position:absolute;left:516.96px;top:244.85px;width:1.00px;height:21.55px;background:#404040;"></div>
<div style="position:absolute;left:481.44px;top:331.05px;width:1.00px;height:43.10px;background:#404040;"></div>
<div style="position:absolute;left:481.44px;top:460.35px;width:1.00px;height:86.20px;background:#404040;"></div>
<div style="position:absolute;left:390.5px;top:50.3px;width:3.4px;height:344.80px;background:repeating-linear-gradient(135deg,#2487b0 0 1px,rgba(27,129,168,.4) 1px 2px);"></div>
<div class="code" style="left:340px;width:47px;text-align:right;top:50.00px;line-height:21.55px;font-size:14.8px;color:#858585;letter-spacing:-0.030px">26</div>
<div class="code" style="left:516.96px;top:50.00px;line-height:21.55px;font-size:14.8px;letter-spacing:-0.030px"><span class="s">&#x27;manage-profile&#x27;</span><span class="w">, </span><span class="s">&#x27;show-profile&#x27;</span><span class="w">, </span><span class="s">&#x27;create-profile&#x27;</span><span class="w">, </span><span class="s">&#x27;edit-profile&#x27;</span><span class="w">, </span><span class="s">&#x27;delete-profile&#x27;</span><span class="w">,</span></div>
<div class="code" style="left:340px;width:47px;text-align:right;top:71.55px;line-height:21.55px;font-size:14.8px;color:#858585;letter-spacing:-0.030px">27</div>
<div class="code" style="left:516.96px;top:71.55px;line-height:21.55px;font-size:14.8px;letter-spacing:-0.030px"><span class="s">&#x27;manage-facult&#x27;</span><span class="w">, </span><span class="s">&#x27;show-facult&#x27;</span><span class="w">, </span><span class="s">&#x27;create-facult&#x27;</span><span class="w">, </span><span class="s">&#x27;edit-facult&#x27;</span><span class="w">, </span><span class="s">&#x27;delete-facult&#x27;</span><span class="w">,</span></div>
<div class="code" style="left:340px;width:47px;text-align:right;top:93.10px;line-height:21.55px;font-size:14.8px;color:#858585;letter-spacing:-0.030px">28</div>
<div class="code" style="left:516.96px;top:93.10px;line-height:21.55px;font-size:14.8px;letter-spacing:-0.030px"><span class="s">&#x27;manage-academic&#x27;</span><span class="w">, </span><span class="s">&#x27;show-academic&#x27;</span><span class="w">, </span><span class="s">&#x27;create-academic&#x27;</span><span class="w">, </span><span class="s">&#x27;edit-academic&#x27;</span><span class="w">, </span><span class="s">&#x27;delete-academic&#x27;</span><span class="w">,</span></div>
<div class="code" style="left:340px;width:47px;text-align:right;top:114.65px;line-height:21.55px;font-size:14.8px;color:#858585;letter-spacing:-0.030px">29</div>
<div class="code" style="left:516.96px;top:114.65px;line-height:21.55px;font-size:14.8px;letter-spacing:-0.030px"><span class="s">&#x27;manage-class&#x27;</span><span class="w">, </span><span class="s">&#x27;show-class&#x27;</span><span class="w">, </span><span class="s">&#x27;create-class&#x27;</span><span class="w">, </span><span class="s">&#x27;edit-class&#x27;</span><span class="w">, </span><span class="s">&#x27;delete-class&#x27;</span><span class="w">,</span></div>
<div class="code" style="left:340px;width:47px;text-align:right;top:136.20px;line-height:21.55px;font-size:14.8px;color:#858585;letter-spacing:-0.030px">30</div>
<div class="code" style="left:516.96px;top:136.20px;line-height:21.55px;font-size:14.8px;letter-spacing:-0.030px"><span class="s">&#x27;manage-require&#x27;</span><span class="w">, </span><span class="s">&#x27;show-require&#x27;</span><span class="w">, </span><span class="s">&#x27;create-require&#x27;</span><span class="w">, </span><span class="s">&#x27;edit-require&#x27;</span><span class="w">, </span><span class="s">&#x27;delete-require&#x27;</span><span class="w">,</span></div>
<div class="code" style="left:340px;width:47px;text-align:right;top:157.75px;line-height:21.55px;font-size:14.8px;color:#858585;letter-spacing:-0.030px">31</div>
<div class="code" style="left:516.96px;top:157.75px;line-height:21.55px;font-size:14.8px;letter-spacing:-0.030px"><span class="s">&#x27;manage-grade&#x27;</span><span class="w">, </span><span class="s">&#x27;show-grade&#x27;</span><span class="w">, </span><span class="s">&#x27;create-grade&#x27;</span><span class="w">, </span><span class="s">&#x27;edit-grade&#x27;</span><span class="w">, </span><span class="s">&#x27;delete-grade&#x27;</span></div>
<div class="code" style="left:340px;width:47px;text-align:right;top:179.30px;line-height:21.55px;font-size:14.8px;color:#858585;letter-spacing:-0.030px">32</div>
<div class="code" style="left:481.44px;top:179.30px;line-height:21.55px;font-size:14.8px;letter-spacing:-0.030px"><span class="b">]</span><span class="w">;</span></div>
<div class="code" style="left:340px;width:47px;text-align:right;top:200.85px;line-height:21.55px;font-size:14.8px;color:#858585;letter-spacing:-0.030px">33</div>
<div class="code" style="left:481.44px;top:200.85px;line-height:21.55px;font-size:14.8px;letter-spacing:-0.030px"><span class="k">foreach</span><span class="w"> </span><span class="b">(</span><span class="v">$permissions</span><span class="w"> as </span><span class="v">$permission</span><span class="b">)</span><span class="w"> </span><span class="b">{</span></div>
<div class="code" style="left:340px;width:47px;text-align:right;top:222.40px;line-height:21.55px;font-size:14.8px;color:#858585;letter-spacing:-0.030px">34</div>
<div class="code" style="left:516.96px;top:222.40px;line-height:21.55px;font-size:14.8px;letter-spacing:-0.030px"><span class="c">Permission</span><span class="w">::</span><span class="f">create</span><span class="y">(</span><span class="p">[</span></div>
<div class="code" style="left:340px;width:47px;text-align:right;top:243.95px;line-height:21.55px;font-size:14.8px;color:#858585;letter-spacing:-0.030px">35</div>
<div class="code" style="left:552.48px;top:243.95px;line-height:21.55px;font-size:14.8px;letter-spacing:-0.030px"><span class="s">&#x27;name&#x27;</span><span class="w"> =&gt; </span><span class="v">$permission</span></div>
<div class="code" style="left:340px;width:47px;text-align:right;top:265.50px;line-height:21.55px;font-size:14.8px;color:#858585;letter-spacing:-0.030px">36</div>
<div class="code" style="left:516.96px;top:265.50px;line-height:21.55px;font-size:14.8px;letter-spacing:-0.030px"><span class="p">]</span><span class="y">)</span><span class="w">;</span></div>
<div class="code" style="left:340px;width:47px;text-align:right;top:287.05px;line-height:21.55px;font-size:14.8px;color:#858585;letter-spacing:-0.030px">37</div>
<div class="code" style="left:481.44px;top:287.05px;line-height:21.55px;font-size:14.8px;letter-spacing:-0.030px"><span class="b">}</span></div>
<div class="code" style="left:340px;width:47px;text-align:right;top:308.60px;line-height:21.55px;font-size:14.8px;color:#858585;letter-spacing:-0.030px">38</div>
<div class="code" style="left:481.44px;top:308.60px;line-height:21.55px;font-size:14.8px;letter-spacing:-0.030px"><span class="v">$role</span><span class="w"> = </span><span class="c">Role</span><span class="w">::</span><span class="f">create</span><span class="b">(</span><span class="y">[</span></div>
<div class="code" style="left:340px;width:47px;text-align:right;top:330.15px;line-height:21.55px;font-size:14.8px;color:#858585;letter-spacing:-0.030px">39</div>
<div class="code" style="left:516.96px;top:330.15px;line-height:21.55px;font-size:14.8px;letter-spacing:-0.030px"><span class="s">&#x27;name&#x27;</span><span class="w"> =&gt; </span><span class="s">&#x27;admin&#x27;</span><span class="w">,</span></div>
<div class="code" style="left:340px;width:47px;text-align:right;top:351.70px;line-height:21.55px;font-size:14.8px;color:#858585;letter-spacing:-0.030px">40</div>
<div class="code" style="left:516.96px;top:351.70px;line-height:21.55px;font-size:14.8px;letter-spacing:-0.030px"><span class="s">&#x27;desc&#x27;</span><span class="w"> =&gt; </span><span class="s">&#x27;Quản trị viên&#x27;</span></div>
<div class="code" style="left:340px;width:47px;text-align:right;top:373.25px;line-height:21.55px;font-size:14.8px;color:#858585;letter-spacing:-0.030px">41</div>
<div class="code" style="left:481.44px;top:373.25px;line-height:21.55px;font-size:14.8px;letter-spacing:-0.030px"><span class="y">]</span><span class="b">)</span><span class="w">;</span></div>
<div class="code" style="left:340px;width:47px;text-align:right;top:394.80px;line-height:21.55px;font-size:14.8px;color:#858585;letter-spacing:-0.030px">42</div>
<div class="code" style="left:481.44px;top:394.80px;line-height:21.55px;font-size:14.8px;letter-spacing:-0.030px"><span class="v">$role</span><span class="w">-&gt;</span><span class="f">givePermissionTo</span><span class="b">(</span><span class="c">Permission</span><span class="w">::</span><span class="f">all</span><span class="y">(</span><span class="y">)</span><span class="w">-&gt;</span><span class="f">pluck</span><span class="y">(</span><span class="s">&#x27;id&#x27;</span><span class="y">)</span><span class="b">)</span><span class="w">;</span></div>
<div class="code" style="left:340px;width:47px;text-align:right;top:416.35px;line-height:21.55px;font-size:14.8px;color:#858585;letter-spacing:-0.030px">43</div>
<div class="code" style="left:340px;width:47px;text-align:right;top:437.90px;line-height:21.55px;font-size:14.8px;color:#858585;letter-spacing:-0.030px">44</div>
<div class="code" style="left:481.44px;top:437.90px;line-height:21.55px;font-size:14.8px;letter-spacing:-0.030px"><span class="v">$user</span><span class="w"> = </span><span class="c">User</span><span class="w">::</span><span class="f">create</span><span class="b">(</span><span class="y">[</span></div>
<div class="code" style="left:340px;width:47px;text-align:right;top:459.45px;line-height:21.55px;font-size:14.8px;color:#858585;letter-spacing:-0.030px">45</div>
<div class="code" style="left:516.96px;top:459.45px;line-height:21.55px;font-size:14.8px;letter-spacing:-0.030px"><span class="s">&#x27;name&#x27;</span><span class="w"> =&gt; </span><span class="s">&#x27;Lê Xuân Hiền&#x27;</span><span class="w">,</span></div>
<div class="code" style="left:340px;width:47px;text-align:right;top:481.00px;line-height:21.55px;font-size:14.8px;color:#858585;letter-spacing:-0.030px">46</div>
<div class="code" style="left:516.96px;top:481.00px;line-height:21.55px;font-size:14.8px;letter-spacing:-0.030px"><span class="s">&#x27;username&#x27;</span><span class="w"> =&gt; </span><span class="s">&#x27;hienlx&#x27;</span><span class="w">,</span></div>
<div class="code" style="left:340px;width:47px;text-align:right;top:502.55px;line-height:21.55px;font-size:14.8px;color:#858585;letter-spacing:-0.030px">47</div>
<div class="code" style="left:516.96px;top:502.55px;line-height:21.55px;font-size:14.8px;letter-spacing:-0.030px"><span class="s">&#x27;email&#x27;</span><span class="w"> =&gt; </span><span class="s">&#x27;lexuanhien@hnue.edu.vn&#x27;</span><span class="w">,</span></div>
<div class="code" style="left:340px;width:47px;text-align:right;top:524.10px;line-height:21.55px;font-size:14.8px;color:#c6c6c6;letter-spacing:-0.030px">48</div>
<div class="code" style="left:516.96px;top:524.10px;line-height:21.55px;font-size:14.8px;letter-spacing:-0.030px"><span class="s">&#x27;password&#x27;</span><span class="w"> =&gt; </span><span class="s">&#x27;Hash::make(&#x27;</span><span class="w">Kcntt123@</span><span class="s">&#x27;)&#x27;</span></div>
<div class="code" style="left:340px;width:47px;text-align:right;top:545.65px;line-height:21.55px;font-size:14.8px;color:#858585;letter-spacing:-0.030px">49</div>
<div class="code" style="left:481.44px;top:545.65px;line-height:21.55px;font-size:14.8px;letter-spacing:-0.030px"><span class="y">]</span><span class="b">)</span><span class="w">;</span></div>
<div class="code" style="left:340px;width:47px;text-align:right;top:567.20px;line-height:21.55px;font-size:14.8px;color:#858585;letter-spacing:-0.030px">50</div>
<div class="code" style="left:445.92px;top:567.20px;line-height:21.55px;font-size:14.8px;letter-spacing:-0.030px"><span class="p">}</span></div>
<div class="code" style="left:340px;width:47px;text-align:right;top:588.75px;line-height:21.55px;font-size:14.8px;color:#858585;letter-spacing:-0.030px">51</div>
<div class="code" style="left:410.40px;top:588.75px;line-height:21.55px;font-size:14.8px;letter-spacing:-0.030px"><span class="y">}</span></div>
<div class="code" style="left:340px;width:47px;text-align:right;top:610.30px;line-height:21.55px;font-size:14.8px;color:#858585;letter-spacing:-0.030px">52</div>
<div style="position:absolute;left:1318.5px;top:51.0px;width:3.8px;height:672.8px;background:linear-gradient(90deg,rgba(0,0,0,0),rgba(0,0,0,.38));"></div>
<svg style="position:absolute;left:1326.00px;top:46.00px;" width="96.00" height="100.00" viewBox="0 0 96 100"><g opacity=".62" stroke-width="1.3" stroke-dasharray="0.6 0.275"><line x1="4.70" y1="5.33" x2="9.08" y2="5.33" stroke="#569cd6"/><line x1="4.70" y1="8.88" x2="12.58" y2="8.88" stroke="#569cd6"/><line x1="13.45" y1="8.88" x2="27.45" y2="8.88" stroke="#4ec9b0"/><line x1="27.45" y1="8.88" x2="28.33" y2="8.88" stroke="#d4d4d4"/><line x1="4.70" y1="12.43" x2="6.45" y2="12.43" stroke="#6a9955"/><line x1="7.33" y1="12.43" x2="9.95" y2="12.43" stroke="#6a9955"/><line x1="10.83" y1="12.43" x2="57.20" y2="12.43" stroke="#6a9955"/><line x1="4.70" y1="14.20" x2="7.33" y2="14.20" stroke="#569cd6"/><line x1="8.20" y1="14.20" x2="30.95" y2="14.20" stroke="#4ec9b0"/><line x1="30.95" y1="14.20" x2="31.83" y2="14.20" stroke="#d4d4d4"/><line x1="4.70" y1="15.98" x2="7.33" y2="15.98" stroke="#569cd6"/><line x1="8.20" y1="15.98" x2="38.83" y2="15.98" stroke="#4ec9b0"/><line x1="38.83" y1="15.98" x2="39.70" y2="15.98" stroke="#d4d4d4"/><line x1="4.70" y1="17.75" x2="7.33" y2="17.75" stroke="#569cd6"/><line x1="8.20" y1="17.75" x2="33.58" y2="17.75" stroke="#4ec9b0"/><line x1="33.58" y1="17.75" x2="34.45" y2="17.75" stroke="#d4d4d4"/><line x1="4.70" y1="19.53" x2="7.33" y2="19.53" stroke="#569cd6"/><line x1="8.20" y1="19.53" x2="21.33" y2="19.53" stroke="#4ec9b0"/><line x1="21.33" y1="19.53" x2="22.20" y2="19.53" stroke="#d4d4d4"/><line x1="4.70" y1="23.08" x2="9.08" y2="23.08" stroke="#569cd6"/><line x1="9.95" y1="23.08" x2="22.20" y2="23.08" stroke="#4ec9b0"/><line x1="23.08" y1="23.08" x2="29.20" y2="23.08" stroke="#569cd6"/><line x1="30.08" y1="23.08" x2="35.33" y2="23.08" stroke="#4ec9b0"/><line x1="4.70" y1="24.85" x2="5.58" y2="24.85" stroke="#ffd700"/><line x1="8.20" y1="26.62" x2="10.83" y2="26.62" stroke="#6a9955"/><line x1="9.08" y1="28.40" x2="9.95" y2="28.40" stroke="#6a9955"/><line x1="10.83" y1="28.40" x2="14.33" y2="28.40" stroke="#6a9955"/><line x1="15.20" y1="28.40" x2="17.83" y2="28.40" stroke="#6a9955"/><line x1="18.70" y1="28.40" x2="30.08" y2="28.40" stroke="#6a9955"/><line x1="30.95" y1="28.40" x2="38.83" y2="28.40" stroke="#6a9955"/><line x1="9.08" y1="30.17" x2="10.83" y2="30.17" stroke="#6a9955"/><line x1="8.20" y1="31.95" x2="13.45" y2="31.95" stroke="#569cd6"/><line x1="14.33" y1="31.95" x2="21.33" y2="31.95" stroke="#569cd6"/><line x1="22.20" y1="31.95" x2="24.83" y2="31.95" stroke="#dcdcaa"/><line x1="24.83" y1="31.95" x2="26.58" y2="31.95" stroke="#da70d6"/><line x1="26.58" y1="31.95" x2="27.45" y2="31.95" stroke="#d4d4d4"/><line x1="28.33" y1="31.95" x2="31.83" y2="31.95" stroke="#569cd6"/><line x1="8.20" y1="33.72" x2="9.08" y2="33.72" stroke="#da70d6"/><line x1="11.70" y1="35.50" x2="17.83" y2="35.50" stroke="#9cdcfe"/><line x1="18.70" y1="35.50" x2="19.58" y2="35.50" stroke="#d4d4d4"/><line x1="20.45" y1="35.50" x2="21.33" y2="35.50" stroke="#179fff"/><line x1="15.20" y1="37.28" x2="19.58" y2="37.28" stroke="#ce9178"/><line x1="19.58" y1="37.28" x2="20.45" y2="37.28" stroke="#d4d4d4"/><line x1="21.33" y1="37.28" x2="32.70" y2="37.28" stroke="#ce9178"/><line x1="32.70" y1="37.28" x2="33.58" y2="37.28" stroke="#d4d4d4"/><line x1="15.20" y1="39.05" x2="21.33" y2="39.05" stroke="#ce9178"/><line x1="21.33" y1="39.05" x2="22.20" y2="39.05" stroke="#d4d4d4"/><line x1="23.08" y1="39.05" x2="30.95" y2="39.05" stroke="#ce9178"/><line x1="30.95" y1="39.05" x2="31.83" y2="39.05" stroke="#d4d4d4"/><line x1="32.70" y1="39.05" x2="40.58" y2="39.05" stroke="#ce9178"/><line x1="40.58" y1="39.05" x2="41.45" y2="39.05" stroke="#d4d4d4"/><line x1="15.20" y1="40.83" x2="25.70" y2="40.83" stroke="#ce9178"/><line x1="11.70" y1="42.60" x2="12.58" y2="42.60" stroke="#179fff"/><line x1="12.58" y1="42.60" x2="13.45" y2="42.60" stroke="#d4d4d4"/><line x1="11.70" y1="44.38" x2="22.20" y2="44.38" stroke="#9cdcfe"/><line x1="23.08" y1="44.38" x2="23.95" y2="44.38" stroke="#d4d4d4"/><line x1="24.83" y1="44.38" x2="25.70" y2="44.38" stroke="#179fff"/><line x1="15.20" y1="46.15" x2="26.58" y2="46.15" stroke="#ce9178"/><line x1="26.58" y1="46.15" x2="27.45" y2="46.15" stroke="#d4d4d4"/><line x1="28.33" y1="46.15" x2="37.95" y2="46.15" stroke="#ce9178"/><line x1="37.95" y1="46.15" x2="38.83" y2="46.15" stroke="#d4d4d4"/><line x1="39.70" y1="46.15" x2="51.08" y2="46.15" stroke="#ce9178"/><line x1="51.08" y1="46.15" x2="51.95" y2="46.15" stroke="#d4d4d4"/><line x1="52.83" y1="46.15" x2="62.45" y2="46.15" stroke="#ce9178"/><line x1="62.45" y1="46.15" x2="63.33" y2="46.15" stroke="#d4d4d4"/><line x1="64.20" y1="46.15" x2="75.58" y2="46.15" stroke="#ce9178"/><line x1="75.58" y1="46.15" x2="76.45" y2="46.15" stroke="#d4d4d4"/><line x1="15.20" y1="47.92" x2="26.58" y2="47.92" stroke="#ce9178"/><line x1="26.58" y1="47.92" x2="27.45" y2="47.92" stroke="#d4d4d4"/><line x1="28.33" y1="47.92" x2="37.95" y2="47.92" stroke="#ce9178"/><line x1="37.95" y1="47.92" x2="38.83" y2="47.92" stroke="#d4d4d4"/><line x1="39.70" y1="47.92" x2="51.08" y2="47.92" stroke="#ce9178"/><line x1="51.08" y1="47.92" x2="51.95" y2="47.92" stroke="#d4d4d4"/><line x1="52.83" y1="47.92" x2="62.45" y2="47.92" stroke="#ce9178"/><line x1="62.45" y1="47.92" x2="63.33" y2="47.92" stroke="#d4d4d4"/><line x1="64.20" y1="47.92" x2="75.58" y2="47.92" stroke="#ce9178"/><line x1="75.58" y1="47.92" x2="76.45" y2="47.92" stroke="#d4d4d4"/><line x1="15.20" y1="49.70" x2="29.20" y2="49.70" stroke="#ce9178"/><line x1="29.20" y1="49.70" x2="30.08" y2="49.70" stroke="#d4d4d4"/><line x1="30.95" y1="49.70" x2="43.20" y2="49.70" stroke="#ce9178"/><line x1="43.20" y1="49.70" x2="44.08" y2="49.70" stroke="#d4d4d4"/><line x1="44.95" y1="49.70" x2="58.95" y2="49.70" stroke="#ce9178"/><line x1="58.95" y1="49.70" x2="59.83" y2="49.70" stroke="#d4d4d4"/><line x1="60.70" y1="49.70" x2="72.95" y2="49.70" stroke="#ce9178"/><line x1="72.95" y1="49.70" x2="73.83" y2="49.70" stroke="#d4d4d4"/><line x1="74.70" y1="49.70" x2="88.70" y2="49.70" stroke="#ce9178"/><line x1="88.70" y1="49.70" x2="89.58" y2="49.70" stroke="#d4d4d4"/><line x1="15.20" y1="51.47" x2="28.33" y2="51.47" stroke="#ce9178"/><line x1="28.33" y1="51.47" x2="29.20" y2="51.47" stroke="#d4d4d4"/><line x1="30.08" y1="51.47" x2="41.45" y2="51.47" stroke="#ce9178"/><line x1="41.45" y1="51.47" x2="42.33" y2="51.47" stroke="#d4d4d4"/><line x1="43.20" y1="51.47" x2="56.33" y2="51.47" stroke="#ce9178"/><line x1="56.33" y1="51.47" x2="57.20" y2="51.47" stroke="#d4d4d4"/><line x1="58.08" y1="51.47" x2="69.45" y2="51.47" stroke="#ce9178"/><line x1="69.45" y1="51.47" x2="70.33" y2="51.47" stroke="#d4d4d4"/><line x1="71.20" y1="51.47" x2="84.33" y2="51.47" stroke="#ce9178"/><line x1="84.33" y1="51.47" x2="85.20" y2="51.47" stroke="#d4d4d4"/><line x1="15.20" y1="53.25" x2="30.08" y2="53.25" stroke="#ce9178"/><line x1="30.08" y1="53.25" x2="30.95" y2="53.25" stroke="#d4d4d4"/><line x1="31.83" y1="53.25" x2="44.95" y2="53.25" stroke="#ce9178"/><line x1="44.95" y1="53.25" x2="45.83" y2="53.25" stroke="#d4d4d4"/><line x1="46.70" y1="53.25" x2="61.58" y2="53.25" stroke="#ce9178"/><line x1="61.58" y1="53.25" x2="62.45" y2="53.25" stroke="#d4d4d4"/><line x1="63.33" y1="53.25" x2="76.45" y2="53.25" stroke="#ce9178"/><line x1="76.45" y1="53.25" x2="77.33" y2="53.25" stroke="#d4d4d4"/><line x1="78.20" y1="53.25" x2="93.08" y2="53.25" stroke="#ce9178"/><line x1="93.08" y1="53.25" x2="93.95" y2="53.25" stroke="#d4d4d4"/><line x1="15.20" y1="55.03" x2="27.45" y2="55.03" stroke="#ce9178"/><line x1="27.45" y1="55.03" x2="28.33" y2="55.03" stroke="#d4d4d4"/><line x1="29.20" y1="55.03" x2="39.70" y2="55.03" stroke="#ce9178"/><line x1="39.70" y1="55.03" x2="40.58" y2="55.03" stroke="#d4d4d4"/><line x1="41.45" y1="55.03" x2="53.70" y2="55.03" stroke="#ce9178"/><line x1="53.70" y1="55.03" x2="54.58" y2="55.03" stroke="#d4d4d4"/><line x1="55.45" y1="55.03" x2="65.95" y2="55.03" stroke="#ce9178"/><line x1="65.95" y1="55.03" x2="66.83" y2="55.03" stroke="#d4d4d4"/><line x1="67.70" y1="55.03" x2="79.95" y2="55.03" stroke="#ce9178"/><line x1="79.95" y1="55.03" x2="80.83" y2="55.03" stroke="#d4d4d4"/><line x1="15.20" y1="56.80" x2="29.20" y2="56.80" stroke="#ce9178"/><line x1="29.20" y1="56.80" x2="30.08" y2="56.80" stroke="#d4d4d4"/><line x1="30.95" y1="56.80" x2="43.20" y2="56.80" stroke="#ce9178"/><line x1="43.20" y1="56.80" x2="44.08" y2="56.80" stroke="#d4d4d4"/><line x1="44.95" y1="56.80" x2="58.95" y2="56.80" stroke="#ce9178"/><line x1="58.95" y1="56.80" x2="59.83" y2="56.80" stroke="#d4d4d4"/><line x1="60.70" y1="56.80" x2="72.95" y2="56.80" stroke="#ce9178"/><line x1="72.95" y1="56.80" x2="73.83" y2="56.80" stroke="#d4d4d4"/><line x1="74.70" y1="56.80" x2="88.70" y2="56.80" stroke="#ce9178"/><line x1="88.70" y1="56.80" x2="89.58" y2="56.80" stroke="#d4d4d4"/><line x1="15.20" y1="58.58" x2="27.45" y2="58.58" stroke="#ce9178"/><line x1="27.45" y1="58.58" x2="28.33" y2="58.58" stroke="#d4d4d4"/><line x1="29.20" y1="58.58" x2="39.70" y2="58.58" stroke="#ce9178"/><line x1="39.70" y1="58.58" x2="40.58" y2="58.58" stroke="#d4d4d4"/><line x1="41.45" y1="58.58" x2="53.70" y2="58.58" stroke="#ce9178"/><line x1="53.70" y1="58.58" x2="54.58" y2="58.58" stroke="#d4d4d4"/><line x1="55.45" y1="58.58" x2="65.95" y2="58.58" stroke="#ce9178"/><line x1="65.95" y1="58.58" x2="66.83" y2="58.58" stroke="#d4d4d4"/><line x1="67.70" y1="58.58" x2="79.95" y2="58.58" stroke="#ce9178"/><line x1="11.70" y1="60.35" x2="12.58" y2="60.35" stroke="#179fff"/><line x1="12.58" y1="60.35" x2="13.45" y2="60.35" stroke="#d4d4d4"/><line x1="11.70" y1="62.12" x2="17.83" y2="62.12" stroke="#c586c0"/><line x1="18.70" y1="62.12" x2="19.58" y2="62.12" stroke="#179fff"/><line x1="19.58" y1="62.12" x2="30.08" y2="62.12" stroke="#9cdcfe"/><line x1="30.95" y1="62.12" x2="32.70" y2="62.12" stroke="#d4d4d4"/><line x1="33.58" y1="62.12" x2="43.20" y2="62.12" stroke="#9cdcfe"/><line x1="43.20" y1="62.12" x2="44.08" y2="62.12" stroke="#179fff"/><line x1="44.95" y1="62.12" x2="45.83" y2="62.12" stroke="#179fff"/><line x1="15.20" y1="63.90" x2="23.95" y2="63.90" stroke="#4ec9b0"/><line x1="23.95" y1="63.90" x2="25.70" y2="63.90" stroke="#d4d4d4"/><line x1="25.70" y1="63.90" x2="30.95" y2="63.90" stroke="#dcdcaa"/><line x1="30.95" y1="63.90" x2="31.83" y2="63.90" stroke="#ffd700"/><line x1="31.83" y1="63.90" x2="32.70" y2="63.90" stroke="#da70d6"/><line x1="18.70" y1="65.67" x2="23.95" y2="65.67" stroke="#ce9178"/><line x1="24.83" y1="65.67" x2="26.58" y2="65.67" stroke="#d4d4d4"/><line x1="27.45" y1="65.67" x2="37.08" y2="65.67" stroke="#9cdcfe"/><line x1="15.20" y1="67.45" x2="16.08" y2="67.45" stroke="#da70d6"/><line x1="16.08" y1="67.45" x2="16.95" y2="67.45" stroke="#ffd700"/><line x1="16.95" y1="67.45" x2="17.83" y2="67.45" stroke="#d4d4d4"/><line x1="11.70" y1="69.22" x2="12.58" y2="69.22" stroke="#179fff"/><line x1="11.70" y1="71.00" x2="16.08" y2="71.00" stroke="#9cdcfe"/><line x1="16.95" y1="71.00" x2="17.83" y2="71.00" stroke="#d4d4d4"/><line x1="18.70" y1="71.00" x2="22.20" y2="71.00" stroke="#4ec9b0"/><line x1="22.20" y1="71.00" x2="23.95" y2="71.00" stroke="#d4d4d4"/><line x1="23.95" y1="71.00" x2="29.20" y2="71.00" stroke="#dcdcaa"/><line x1="29.20" y1="71.00" x2="30.08" y2="71.00" stroke="#179fff"/><line x1="30.08" y1="71.00" x2="30.95" y2="71.00" stroke="#ffd700"/><line x1="15.20" y1="72.78" x2="20.45" y2="72.78" stroke="#ce9178"/><line x1="21.33" y1="72.78" x2="23.08" y2="72.78" stroke="#d4d4d4"/><line x1="23.95" y1="72.78" x2="30.08" y2="72.78" stroke="#ce9178"/><line x1="30.08" y1="72.78" x2="30.95" y2="72.78" stroke="#d4d4d4"/><line x1="15.20" y1="74.55" x2="20.45" y2="74.55" stroke="#ce9178"/><line x1="21.33" y1="74.55" x2="23.08" y2="74.55" stroke="#d4d4d4"/><line x1="23.95" y1="74.55" x2="28.33" y2="74.55" stroke="#ce9178"/><line x1="29.20" y1="74.55" x2="31.83" y2="74.55" stroke="#ce9178"/><line x1="32.70" y1="74.55" x2="37.08" y2="74.55" stroke="#ce9178"/><line x1="11.70" y1="76.33" x2="12.58" y2="76.33" stroke="#ffd700"/><line x1="12.58" y1="76.33" x2="13.45" y2="76.33" stroke="#179fff"/><line x1="13.45" y1="76.33" x2="14.33" y2="76.33" stroke="#d4d4d4"/><line x1="11.70" y1="78.10" x2="16.08" y2="78.10" stroke="#9cdcfe"/><line x1="16.08" y1="78.10" x2="17.83" y2="78.10" stroke="#d4d4d4"/><line x1="17.83" y1="78.10" x2="31.83" y2="78.10" stroke="#dcdcaa"/><line x1="31.83" y1="78.10" x2="32.70" y2="78.10" stroke="#179fff"/><line x1="32.70" y1="78.10" x2="41.45" y2="78.10" stroke="#4ec9b0"/><line x1="41.45" y1="78.10" x2="43.20" y2="78.10" stroke="#d4d4d4"/><line x1="43.20" y1="78.10" x2="45.83" y2="78.10" stroke="#dcdcaa"/><line x1="45.83" y1="78.10" x2="46.70" y2="78.10" stroke="#ffd700"/><line x1="46.70" y1="78.10" x2="47.58" y2="78.10" stroke="#ffd700"/><line x1="47.58" y1="78.10" x2="49.33" y2="78.10" stroke="#d4d4d4"/><line x1="49.33" y1="78.10" x2="53.70" y2="78.10" stroke="#dcdcaa"/><line x1="53.70" y1="78.10" x2="54.58" y2="78.10" stroke="#ffd700"/><line x1="54.58" y1="78.10" x2="58.08" y2="78.10" stroke="#ce9178"/><line x1="58.08" y1="78.10" x2="58.95" y2="78.10" stroke="#ffd700"/><line x1="58.95" y1="78.10" x2="59.83" y2="78.10" stroke="#179fff"/><line x1="59.83" y1="78.10" x2="60.70" y2="78.10" stroke="#d4d4d4"/><line x1="11.70" y1="81.65" x2="16.08" y2="81.65" stroke="#9cdcfe"/><line x1="16.95" y1="81.65" x2="17.83" y2="81.65" stroke="#d4d4d4"/><line x1="18.70" y1="81.65" x2="22.20" y2="81.65" stroke="#4ec9b0"/><line x1="22.20" y1="81.65" x2="23.95" y2="81.65" stroke="#d4d4d4"/><line x1="23.95" y1="81.65" x2="29.20" y2="81.65" stroke="#dcdcaa"/><line x1="29.20" y1="81.65" x2="30.08" y2="81.65" stroke="#179fff"/><line x1="30.08" y1="81.65" x2="30.95" y2="81.65" stroke="#ffd700"/><line x1="15.20" y1="83.43" x2="20.45" y2="83.43" stroke="#ce9178"/><line x1="21.33" y1="83.43" x2="23.08" y2="83.43" stroke="#d4d4d4"/><line x1="23.95" y1="83.43" x2="26.58" y2="83.43" stroke="#ce9178"/><line x1="27.45" y1="83.43" x2="30.95" y2="83.43" stroke="#ce9178"/><line x1="31.83" y1="83.43" x2="36.20" y2="83.43" stroke="#ce9178"/><line x1="36.20" y1="83.43" x2="37.08" y2="83.43" stroke="#d4d4d4"/><line x1="15.20" y1="85.20" x2="23.95" y2="85.20" stroke="#ce9178"/><line x1="24.83" y1="85.20" x2="26.58" y2="85.20" stroke="#d4d4d4"/><line x1="27.45" y1="85.20" x2="34.45" y2="85.20" stroke="#ce9178"/><line x1="34.45" y1="85.20" x2="35.33" y2="85.20" stroke="#d4d4d4"/><line x1="15.20" y1="86.97" x2="21.33" y2="86.97" stroke="#ce9178"/><line x1="22.20" y1="86.97" x2="23.95" y2="86.97" stroke="#d4d4d4"/><line x1="24.83" y1="86.97" x2="45.83" y2="86.97" stroke="#ce9178"/><line x1="45.83" y1="86.97" x2="46.70" y2="86.97" stroke="#d4d4d4"/><line x1="15.20" y1="88.75" x2="23.95" y2="88.75" stroke="#ce9178"/><line x1="24.83" y1="88.75" x2="26.58" y2="88.75" stroke="#d4d4d4"/><line x1="27.45" y1="88.75" x2="38.83" y2="88.75" stroke="#ce9178"/><line x1="38.83" y1="88.75" x2="46.70" y2="88.75" stroke="#d4d4d4"/><line x1="46.70" y1="88.75" x2="49.33" y2="88.75" stroke="#ce9178"/><line x1="11.70" y1="90.52" x2="12.58" y2="90.52" stroke="#ffd700"/><line x1="12.58" y1="90.52" x2="13.45" y2="90.52" stroke="#179fff"/><line x1="13.45" y1="90.52" x2="14.33" y2="90.52" stroke="#d4d4d4"/><line x1="8.20" y1="92.30" x2="9.08" y2="92.30" stroke="#da70d6"/><line x1="4.70" y1="94.07" x2="5.58" y2="94.07" stroke="#ffd700"/></g></svg>
<div style="position:absolute;left:1324.50px;top:60.40px;width:2.00px;height:3.60px;background:#587c0c;opacity:.75"></div>
<div style="position:absolute;left:1324.50px;top:80.60px;width:2.00px;height:42.80px;background:#1b81a8;opacity:.7"></div>
<div style="position:absolute;left:1422.00px;top:50.00px;width:0.90px;height:673.80px;background:#3a3a3a;"></div>
<div style="position:absolute;left:1422.00px;top:49.80px;width:13.00px;height:0.90px;background:#3a3a3a;"></div>
<div style="position:absolute;left:1423.20px;top:98.00px;width:3.70px;height:18.00px;background:#587c0c;"></div>
<div style="position:absolute;left:1423.20px;top:188.60px;width:3.70px;height:196.00px;background:#1b81a8;opacity:.75"></div>
<div style="position:absolute;left:1422.80px;top:254.70px;width:12.40px;height:255.80px;background:rgba(121,121,121,.4);"></div>
<div style="position:absolute;left:1422.80px;top:433.60px;width:12.40px;height:1.50px;background:#9a9a9a;"></div>
<div style="position:absolute;left:410.50px;top:713.10px;width:884.50px;height:10.70px;background:rgba(121,121,121,.4);"></div>
<div style="position:absolute;left:0.00px;top:723.80px;width:1436.00px;height:19.90px;background:#007acc;"></div>
<div style="position:absolute;left:0.00px;top:723.80px;width:29.50px;height:19.90px;background:#16825d;"></div>
<svg style="position:absolute;left:0.00px;top:724.00px;" width="60.00" height="20.00" viewBox="0 724 60 20"><g fill="none" stroke="#ffffff" stroke-width="1.15"><path d="M10 732.2 L14 735.6 L10.1 739.2"/><path d="M18.6 728.8 L14.7 732.3 L18.6 735.8"/></g><g fill="none" stroke="#ffffff" stroke-width="1.05"><circle cx="40" cy="730.1" r="1.45"/><circle cx="40" cy="738.5" r="1.45"/><circle cx="46" cy="732.2" r="1.45"/><path d="M40 731.6 V737 M46 733.7 Q45.8 735.8 41.2 736.2"/></g></svg>
<div class="t " style="left:52.40px;top:726.60px;line-height:16px;font-size:10.75px;color:#ffffff;font-weight:400;transform:scaleX(0.9663);transform-origin:0 50%;">xet_diem_ren_luyen*</div>
<svg style="position:absolute;left:160.00px;top:724.00px;" width="80.00" height="20.00" viewBox="160 724 80 20"><g fill="none" stroke="#fff" stroke-width="1.25"><path d="M165.9 733.2 A4.4 4.4 0 0 1 174.2 732.6"/><path d="M174.3 735.2 A4.4 4.4 0 0 1 166 735.8"/></g><path d="M172.2 733.4 L176.6 733.6 L175.2 729.9 Z M168 735 L163.6 734.8 L165 738.5 Z" fill="#fff"/><g fill="none" stroke="#fff" stroke-width="1.15" stroke-linejoin="round"><circle cx="196.9" cy="734.3" r="5.3"/><path d="M194.6 732 L199.2 736.6 M199.2 732 L194.6 736.6"/><path d="M221.2 729 L226.6 738.6 H215.8 Z"/><path d="M221.2 732.4 V735.6 M221.2 736.6 V737.4"/></g></svg>
<div class="t " style="left:206.20px;top:726.60px;line-height:16px;font-size:10.75px;color:#ffffff;font-weight:400;">0</div>
<div class="t " style="left:230.30px;top:726.60px;line-height:16px;font-size:10.75px;color:#ffffff;font-weight:400;">0</div>
<div class="t " style="left:1094.80px;top:726.60px;line-height:16px;font-size:10.75px;color:#ffffff;font-weight:400;transform:scaleX(0.9642);transform-origin:0 50%;">Ln 48, Col 48 (8 selected)</div>
<div class="t " style="left:1227.60px;top:726.60px;line-height:16px;font-size:10.75px;color:#ffffff;font-weight:400;transform:scaleX(0.9077);transform-origin:0 50%;">Spaces: 4</div>
<div class="t " style="left:1286.10px;top:726.60px;line-height:16px;font-size:10.75px;color:#ffffff;font-weight:400;transform:scaleX(0.9091);transform-origin:0 50%;">UTF-8</div>
<div class="t " style="left:1328.20px;top:726.60px;line-height:16px;font-size:10.75px;color:#ffffff;font-weight:400;transform:scaleX(0.7811);transform-origin:0 50%;">LF</div>
<div class="t " style="left:1348.30px;top:726.60px;line-height:16px;font-size:10.75px;color:#ffffff;font-weight:400;transform:scaleX(0.9182);transform-origin:0 50%;">PHP</div>
<svg style="position:absolute;left:1383.30px;top:729.00px;" width="12.50" height="11.20" viewBox="0 0 12.5 11.2"><g fill="none" stroke="#fff" stroke-width="1" stroke-linejoin="round"><path d="M3.6 1 H11.6 V6.4 H9.4 L7.6 8.2"/><circle cx="4" cy="4.6" r="1.7"/><path d="M0.9 10.6 Q1.2 7.4 4 7.4 Q6.8 7.4 7.1 10.6"/></g></svg>
<svg style="position:absolute;left:1411.00px;top:729.00px;" width="10.40" height="11.20" viewBox="0 0 10.4 11.2"><g fill="none" stroke="#fff" stroke-width="1" stroke-linejoin="round"><path d="M1 8.6 H9.4 L8.2 7 V4.4 Q8.2 1 5.2 1 Q2.2 1 2.2 4.4 V7 Z"/><path d="M4 9.2 Q5.2 10.8 6.4 9.2"/></g></svg>
<div style="position:absolute;left:0.00px;top:743.70px;width:1436.00px;height:8.30px;background:#dbe7f0;"></div>
<div style="position:absolute;left:131.00px;top:743.70px;width:39.00px;height:8.30px;background:#eef4f8;"></div>
<div style="position:absolute;left:156.40px;top:750.70px;width:3.00px;height:2.00px;background:#2b7de0;border-radius:2px 2px 0 0"></div>
<div style="position:absolute;left:236.00px;top:750.60px;width:9.00px;height:2.00px;background:#e8524f;border-radius:5px 5px 0 0"></div>
<div style="position:absolute;left:282.00px;top:750.90px;width:4.00px;height:2.00px;background:#3d9be6;border-radius:2px 2px 0 0"></div>
<div style="position:absolute;left:362.00px;top:750.40px;width:21.00px;height:3.00px;background:#75883a;"></div>
<div style="position:absolute;left:414.00px;top:751.00px;width:5.00px;height:2.00px;background:#7cc36a;border-radius:3px 3px 0 0"></div>
<div class="t " style="left:1339.80px;top:744.80px;line-height:16px;font-size:10.6px;color:#222;font-weight:400;transform:scaleX(0.9800);transform-origin:0 50%;">2:11 PM</div>
<div style="position:absolute;left:1435.10px;top:0.00px;width:1.00px;height:752.00px;background:#e9f3fa;"></div>
</div></body></html>
